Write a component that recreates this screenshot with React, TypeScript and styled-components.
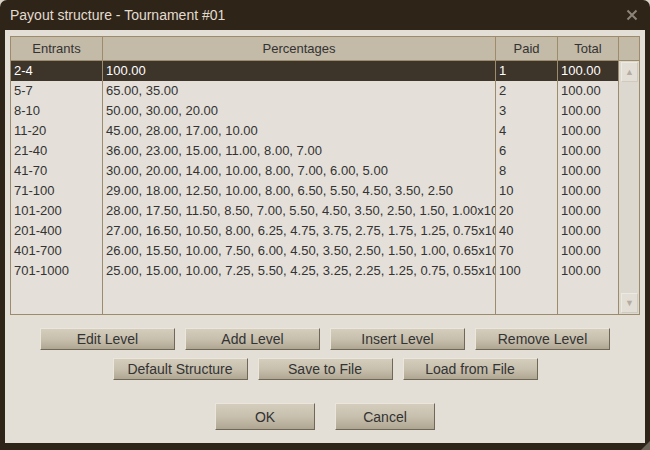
import React from 'react';
import styled, {createGlobalStyle} from 'styled-components';

const GlobalStyle = createGlobalStyle`
  html, body {
    margin: 0;
    padding: 0;
    background: #d9d3c8;
  }
  body {
    font-family: "Liberation Sans", Arial, sans-serif;
  }
`;

type Row = {
  entrants: string
  percentages: string
  paid: string
  total: string
}

const rows: Row[] = [
  {entrants: '2-4', percentages: '100.00', paid: '1', total: '100.00'},
  {entrants: '5-7', percentages: '65.00, 35.00', paid: '2', total: '100.00'},
  {entrants: '8-10', percentages: '50.00, 30.00, 20.00', paid: '3', total: '100.00'},
  {entrants: '11-20', percentages: '45.00, 28.00, 17.00, 10.00', paid: '4', total: '100.00'},
  {entrants: '21-40', percentages: '36.00, 23.00, 15.00, 11.00, 8.00, 7.00', paid: '6', total: '100.00'},
  {entrants: '41-70', percentages: '30.00, 20.00, 14.00, 10.00, 8.00, 7.00, 6.00, 5.00', paid: '8', total: '100.00'},
  {entrants: '71-100', percentages: '29.00, 18.00, 12.50, 10.00, 8.00, 6.50, 5.50, 4.50, 3.50, 2.50', paid: '10', total: '100.00'},
  {entrants: '101-200', percentages: '28.00, 17.50, 11.50, 8.50, 7.00, 5.50, 4.50, 3.50, 2.50, 1.50, 1.00x10', paid: '20', total: '100.00'},
  {entrants: '201-400', percentages: '27.00, 16.50, 10.50, 8.00, 6.25, 4.75, 3.75, 2.75, 1.75, 1.25, 0.75x10', paid: '40', total: '100.00'},
  {entrants: '401-700', percentages: '26.00, 15.50, 10.00, 7.50, 6.00, 4.50, 3.50, 2.50, 1.50, 1.00, 0.65x10', paid: '70', total: '100.00'},
  {entrants: '701-1000', percentages: '25.00, 15.00, 10.00, 7.25, 5.50, 4.25, 3.25, 2.25, 1.25, 0.75, 0.55x10', paid: '100', total: '100.00'},
];

const columns: {key: keyof Row, title: string, width: number}[] = [
  {key: 'entrants', title: 'Entrants', width: 92},
  {key: 'percentages', title: 'Percentages', width: 393},
  {key: 'paid', title: 'Paid', width: 62},
  {key: 'total', title: 'Total', width: 61},
];

const App: React.FC = () => {
  const selected = 0;

  return (
      <>
        <GlobalStyle/>
        <Window>
          <TitleBar>
            <Title>Payout structure - Tournament #01</Title>
            <CloseButton>
              <svg width="12" height="12" viewBox="0 0 12 12">
                <path d="M1.5 1.5 L10.5 10.5 M10.5 1.5 L1.5 10.5" stroke="#8c8479" strokeWidth="2"/>
              </svg>
            </CloseButton>
          </TitleBar>
          <Client>
            <Table>
              <HeaderRow>
                {columns.map(col => (
                    <HeaderCell key={col.key} $width={col.width}>{col.title}</HeaderCell>
                ))}
                <HeaderFiller/>
              </HeaderRow>
              <Body>
                {columns.map(col => (
                    <Column key={col.key} $width={col.width}>
                      {rows.map((row, i) => (
                          <Cell key={i} $selected={i === selected}>{row[col.key]}</Cell>
                      ))}
                    </Column>
                ))}
                <ScrollBar>
                  <ScrollButton>▲</ScrollButton>
                  <ScrollTrack/>
                  <ScrollButton>▼</ScrollButton>
                </ScrollBar>
              </Body>
            </Table>

            <ButtonRow $top={13}>
              <Button>Edit Level</Button>
              <Button>Add Level</Button>
              <Button>Insert Level</Button>
              <Button>Remove Level</Button>
            </ButtonRow>
            <ButtonRow $top={8}>
              <Button>Default Structure</Button>
              <Button>Save to File</Button>
              <Button>Load from File</Button>
            </ButtonRow>
            <ButtonRow $top={23} $gap={20}>
              <Button $width={100} $height={27}>OK</Button>
              <Button $width={100} $height={27}>Cancel</Button>
            </ButtonRow>
          </Client>
          <ResizeGrip/>
        </Window>
      </>
  );
};

const Window = styled.div`
  position: relative;
  width: 650px;
  height: 450px;
  box-sizing: border-box;
  background: #2e2418;
  border-radius: 7px 7px 0 0;
  display: flex;
  flex-direction: column;
  overflow: hidden;
`;

const TitleBar = styled.div`
  height: 30px;
  display: flex;
  align-items: center;
  justify-content: space-between;
  padding: 0 12px 0 10px;
  flex-shrink: 0;
`;

const Title = styled.div`
  color: #e2dccf;
  font-size: 14px;
  padding-bottom: 1px;
`;

const CloseButton = styled.div`
  width: 12px;
  height: 12px;
  display: flex;
  margin-top: -1px;
`;

const Client = styled.div`
  margin: 0 5px 7px 5px;
  flex: 1;
  background: #e3ded6;
  padding: 6px 5px 0 5px;
  display: flex;
  flex-direction: column;
`;

const Table = styled.div`
  border: 1px solid #9d8c6c;
  display: flex;
  flex-direction: column;
  background: #e4dfd8;
`;

const HeaderRow = styled.div`
  display: flex;
  height: 24px;
  background: #c3baa7;
  border-bottom: 1px solid #9d8c6c;
  box-sizing: border-box;
`;

const HeaderCell = styled.div<{ $width: number }>`
  width: ${p => p.$width}px;
  box-sizing: border-box;
  border-right: 1px solid #9d8c6c;
  display: flex;
  align-items: center;
  justify-content: center;
  font-size: 13px;
  color: #333;
`;

const HeaderFiller = styled.div`
  flex: 1;
`;

const Body = styled.div`
  display: flex;
  height: 253px;
`;

const Column = styled.div<{ $width: number }>`
  width: ${p => p.$width}px;
  box-sizing: border-box;
  border-right: 1px solid #9d8c6c;
  display: flex;
  flex-direction: column;
  overflow: hidden;
`;

const Cell = styled.div<{ $selected: boolean }>`
  height: 20px;
  line-height: 20px;
  padding-left: 3px;
  font-size: 13px;
  white-space: nowrap;
  overflow: hidden;
  color: ${p => p.$selected ? '#ffffff' : '#333333'};
  background: ${p => p.$selected ? '#3d342a' : 'transparent'};
`;

const ScrollBar = styled.div`
  flex: 1;
  display: flex;
  flex-direction: column;
  padding: 1px 1px 1px 2px;
  background: #dcd7cf;
  box-sizing: border-box;
`;

const ScrollButton = styled.div`
  height: 18px;
  background: #e2ddd5;
  border: 1px solid #ece8e2;
  border-right-color: #cfc9bf;
  border-bottom-color: #cfc9bf;
  color: #b4ac9f;
  font-size: 9px;
  display: flex;
  align-items: center;
  justify-content: center;
`;

const ScrollTrack = styled.div`
  flex: 1;
  background: #dcd7cf;
`;

const ButtonRow = styled.div<{ $top: number, $gap?: number }>`
  display: flex;
  justify-content: center;
  gap: ${p => p.$gap ?? 10}px;
  margin-top: ${p => p.$top}px;
`;

const Button = styled.div<{ $width?: number, $height?: number }>`
  width: ${p => p.$width ?? 135}px;
  height: ${p => p.$height ?? 22}px;
  box-sizing: border-box;
  background: linear-gradient(to bottom, #d4cdbd 0%, #c8c0ae 50%, #afa692 100%);
  border: 1px solid #ebe6dc;
  border-right-color: #6f6757;
  border-bottom-color: #6f6757;
  display: flex;
  align-items: center;
  justify-content: center;
  font-size: 14px;
  color: #333;
`;

const ResizeGrip = styled.div`
  position: absolute;
  right: 0;
  bottom: 0;
  width: 0;
  height: 0;
  border-left: 9px solid transparent;
  border-bottom: 9px solid #6c6456;
`;

export default App;
